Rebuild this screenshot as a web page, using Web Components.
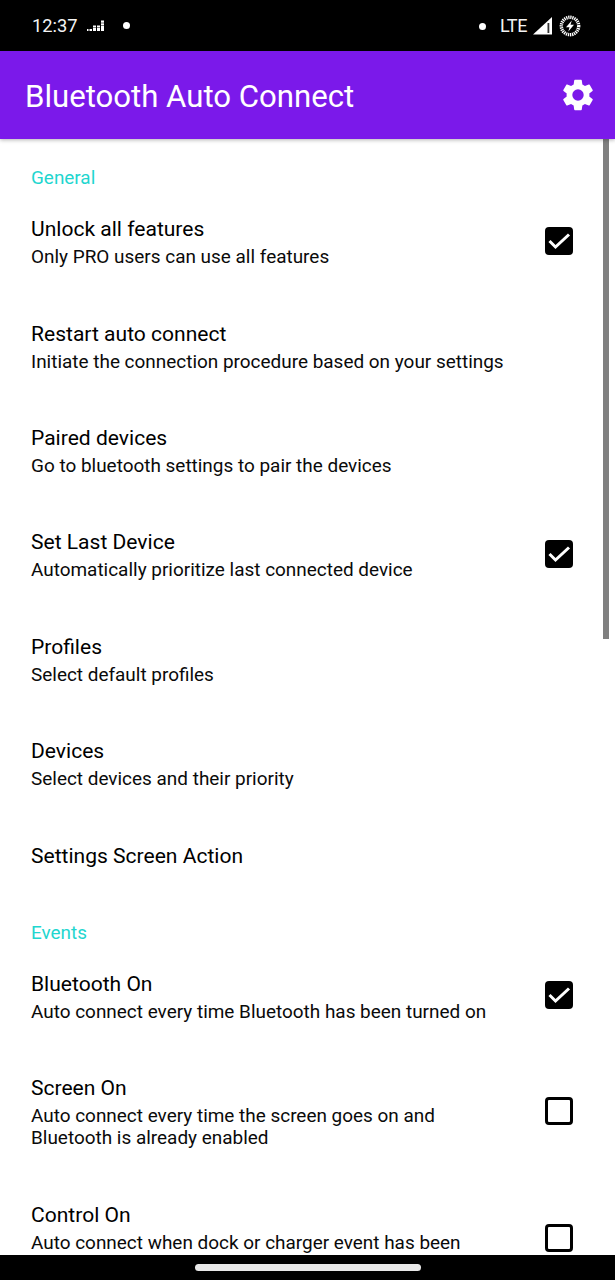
<!DOCTYPE html>
<html lang="en"><head><meta charset="utf-8"><title>Bluetooth Auto Connect</title>
<style>
html,body{margin:0;padding:0;background:#fff}
body{width:615px;height:1280px;overflow:hidden;font-family:Roboto,"Liberation Sans",sans-serif}
app-shell{height:1280px}
</style></head><body>
<template id="status-t"><style>
:host{display:flex;height:51px;background:#000;color:#fff;align-items:center;font:18.300px/1 Roboto,sans-serif;padding:1px 0 0 32px;box-sizing:border-box}
.l{display:flex;align-items:center;flex:1}.time{width:54px;color:#f4f4f4}
.dot{width:7px;height:7px;border-radius:50%;background:#fff;display:block}
.lte{margin:0 0 0 13.500px;font-size:18px;letter-spacing:-.4px;color:#f4f4f4}
svg{display:block}
</style><div class="l"><span class="time">12:37</span><svg width="17" height="12" viewBox="0 0 17 12" style="margin-left:1px" fill="#fff"><rect x="0" y="9" width="1.500" height="2"/><rect x="2.500" y="9" width="2.500" height="2"/><rect x="6" y="5.500" width="3" height="2"/><rect x="6" y="8" width="3" height="3"/><rect x="10" y="5.500" width="3" height="2"/><rect x="10" y="8" width="3" height="3"/><rect x="14" y=".5" width="3" height="2.200"/><rect x="14" y="3.300" width="3" height="2.200"/><rect x="14" y="6" width="3" height="5"/></svg><span class="dot" style="margin-left:18.500px"></span></div>
<span class="dot"></span><span class="lte">LTE</span>
<svg width="19" height="18" viewBox="0 0 19 18" style="margin-left:6px"><path d="M0 17.500 19 0v17.500z" fill="#fff"/><rect x="14.500" y="6" width="1.800" height="10" fill="#000" opacity=".8"/></svg>
<svg width="22" height="22" viewBox="0 0 22 22" style="margin:0 34px 0 7px"><circle cx="11" cy="11" r="8.700" fill="none" stroke="#fff" stroke-width="3.400" stroke-dasharray="1.300 .75"/><path d="M12.800 5.500 7 12.200H10.500L9.300 16.500 15 9.800H11.500z" fill="#fff"/></svg>
</template>

<template id="bar-t"><style>
:host{display:flex;height:88px;background:#7b19ea;color:#fff;align-items:center;padding:0 18px 0 25px;box-sizing:border-box;box-shadow:0 1px 4px rgba(0,0,0,.3);position:relative;z-index:1}
h1{flex:1;margin:0;font:400 31.150px/1 Roboto,sans-serif;position:relative;top:2px}
svg{display:block}
</style><h1><slot></slot></h1>
<svg width="38" height="38" viewBox="0 0 24 24" fill="#fff"><path fill-rule="evenodd" d="M19.140 12.940c.040-.300.060-.610.060-.940 0-.320-.020-.640-.070-.940l2.030-1.580a.49.49 0 0 0 .120-.610l-1.920-3.320a.488.488 0 0 0-.590-.220l-2.390.960a7.030 7.030 0 0 0-1.620-.940l-.360-2.540a.484.484 0 0 0-.480-.410h-3.840c-.240 0-.430.170-.470.410l-.360 2.540c-.590.240-1.130.570-1.620.940l-2.390-.960c-.220-.080-.470 0-.590.220L2.740 8.870c-.120.210-.080.470.120.610l2.030 1.580c-.050.300-.090.630-.090.940s.020.640.070.940l-2.030 1.580a.49.49 0 0 0-.120.610l1.920 3.320c.120.220.370.290.590.220l2.390-.960c.500.380 1.030.700 1.620.940l.360 2.540c.050.240.240.410.480.410h3.840c.240 0 .440-.170.470-.410l.360-2.540c.590-.240 1.130-.560 1.620-.940l2.390.960c.220.080.470 0 .590-.220l1.920-3.320c.120-.220.070-.470-.120-.610l-2.010-1.580zM12 15.600A3.610 3.610 0 0 1 8.400 12 3.610 3.610 0 0 1 12 8.400a3.610 3.610 0 0 1 3.600 3.600 3.610 3.610 0 0 1-3.600 3.600z"/></svg>
</template>

<template id="cat-t"><style>
:host{display:flex;align-items:flex-end;color:#1fd6cf;font:18.900px/20px Roboto,sans-serif;padding-left:31px}
</style><slot></slot></template>

<template id="pref-t"><style>
:host{display:flex;align-items:center;box-sizing:border-box;padding:0 42px 0 31px;color:#000;font-family:Roboto,sans-serif}
.t{flex:1;min-width:0;padding-top:4px}
:host([nosub]) .t{padding-top:3px}
.title{font-size:21.050px;line-height:24px;display:block}
.sub{font-size:18.950px;line-height:22px;display:block;margin-top:5px;color:#0a0a0a}
:host([nosub]) .sub{display:none}
.box{width:28px;height:28px;box-sizing:border-box;border-radius:4px;flex:none;display:none}
:host([check]) .box{display:block}
:host([check="on"]) .box{background:#000}
:host([check="off"]) .box{border:3px solid #000}
:host([check="off"]) svg{display:none}
svg{display:block}
</style><div class="t"><span class="title"></span><span class="sub"><slot></slot></span></div>
<div class="box"><svg width="28" height="28" viewBox="0 0 28 28"><path d="M4.500 14 10.500 20 24 7.500" fill="none" stroke="#fff" stroke-width="3"/></svg></div>
</template>

<template id="list-t"><style>
:host{display:block;position:relative;flex:1;overflow:hidden;background:#fff}
.thumb{position:absolute;right:6px;top:0;width:6px;height:500px;background:#808080}
</style><slot></slot><div class="thumb"></div></template>

<template id="nav-t"><style>
:host{display:flex;justify-content:flex-start;align-items:center;height:25px;background:#000;padding-left:195px;box-sizing:border-box;position:relative;z-index:1}
i{display:block;width:226px;height:7px;border-radius:4px;background:#e8e8e8;margin-top:-1px}
</style><i></i></template>

<template id="shell-t"><style>
:host{display:flex;flex-direction:column}
</style><slot></slot></template>

<app-shell>
<status-bar></status-bar>
<app-bar>Bluetooth Auto Connect</app-bar>
<pref-list>
<pref-cat style="height:49px">General</pref-cat>
<pref-row title-text="Unlock all features" check="on" style="height:105px">Only PRO users can use all features</pref-row>
<pref-row title-text="Restart auto connect" style="height:104px">Initiate the connection procedure based on your settings</pref-row>
<pref-row title-text="Paired devices" style="height:104px">Go to bluetooth settings to pair the devices</pref-row>
<pref-row title-text="Set Last Device" check="on" style="height:105px">Automatically prioritize last connected device</pref-row>
<pref-row title-text="Profiles" style="height:104px">Select default profiles</pref-row>
<pref-row title-text="Devices" style="height:104px">Select devices and their priority</pref-row>
<pref-row title-text="Settings Screen Action" nosub style="height:80px"></pref-row>
<pref-cat style="height:49px">Events</pref-cat>
<pref-row title-text="Bluetooth On" check="on" style="height:104px">Auto connect every time Bluetooth has been turned on</pref-row>
<pref-row title-text="Screen On" check="off" style="height:127px">Auto connect every time the screen goes on and<br>Bluetooth is already enabled</pref-row>
<pref-row title-text="Control On" check="off" style="height:127px">Auto connect when dock or charger event has been<br>&nbsp;</pref-row>
</pref-list>
<nav-bar></nav-bar>
</app-shell>
<script>
function def(name,tid,init){customElements.define(name,class extends HTMLElement{constructor(){super();this.attachShadow({mode:"open"}).appendChild(document.getElementById(tid).content.cloneNode(true))}connectedCallback(){if(init)init(this)}})}
def("status-bar","status-t");
def("app-bar","bar-t");
def("pref-cat","cat-t");
def("pref-row","pref-t",function(el){el.shadowRoot.querySelector(".title").textContent=el.getAttribute("title-text")});
def("pref-list","list-t");
def("nav-bar","nav-t");
def("app-shell","shell-t");
</script>
</body></html>
